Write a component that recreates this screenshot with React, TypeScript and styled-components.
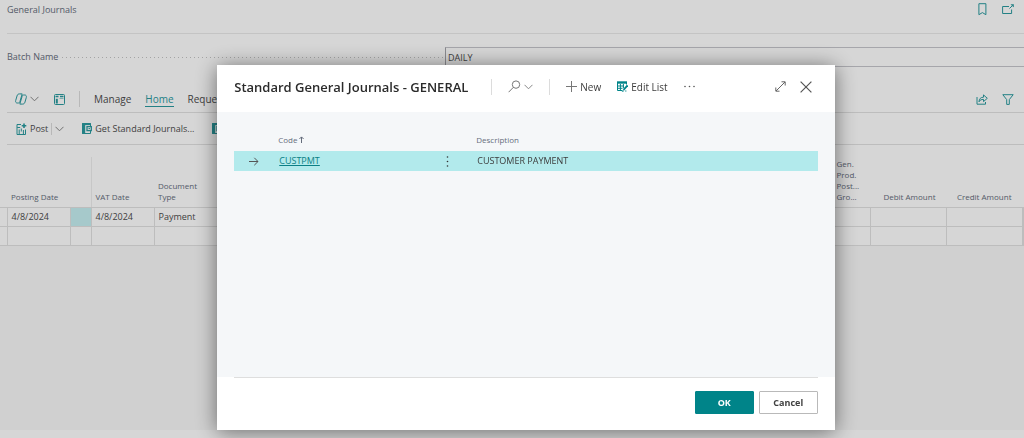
import React from "react";
import styled, { createGlobalStyle } from "styled-components";

const teal = "#2a9a9f";
const grey = "#656d7c";
const sans = `"Open Sans", "Noto Sans", sans-serif`;

const Global = createGlobalStyle`
  * { box-sizing: border-box; }
  body { margin: 0; background: #fff; color: #4c4c4c; font: 10px/14px ${sans}; overflow: hidden; }
  button { font: inherit; color: inherit; background: none; border: 0; padding: 0; margin: 0; cursor: pointer; }
  svg { display: block; flex: none; }
`;

const Page = styled.main`
  display: flex;
  flex-direction: column;
  height: 100vh;
`;
const Caption = styled.header`
  display: flex;
  justify-content: space-between;
  height: 34px;
  margin-left: 7px;
  padding: 3px 10px 0 0;
  border-bottom: 1px solid #eaeaea;
  color: ${grey};
`;
const Heading = styled.h1`
  margin: 0;
  font-size: 9px;
  line-height: 14px;
  font-weight: 400;
`;
const IconGroup = styled.div<{ $gap: number }>`
  display: flex;
  align-items: flex-start;
  gap: ${(p) => p.$gap}px;
  color: ${teal};
`;
const IconButton = styled.button`
  display: flex;
  align-items: center;
`;
const Field = styled.div`
  display: grid;
  grid-template-columns: 438px 1fr;
  align-items: center;
  height: 20px;
  margin: 13px 0 0 7px;
`;
const FieldLabel = styled.label`
  display: flex;
  align-items: center;
  gap: 4px;
  font-size: 9px;
  color: ${grey};
`;
const Leader = styled.span`
  flex: 1;
  height: 1px;
  background: repeating-linear-gradient(90deg, #c4c4c4 0 1px, transparent 1px 4px);
`;
const FieldInput = styled.input`
  height: 20px;
  min-width: 0;
  padding: 0 2px;
  border: 1px solid #c6c6cc;
  border-left-color: #a4a4aa;
  border-right: 0;
  background: #fff;
  color: #4c4c4c;
  font: 9px/18px ${sans};
`;
const Tabs = styled.nav`
  display: flex;
  align-items: center;
  justify-content: space-between;
  height: 27px;
  margin: 19px 0 0 7px;
  padding: 0 10px 0 8px;
  border-bottom: 1px solid #e2e2e2;
`;
const Row = styled.div<{ $gap: number; $center?: boolean }>`
  display: flex;
  align-items: center;
  justify-content: ${(p) => (p.$center ? "center" : "flex-start")};
  gap: ${(p) => p.$gap}px;
`;
const Tab = styled.button<{ $active?: boolean }>`
  line-height: 14px;
  border-bottom: 1px solid ${(p) => (p.$active ? teal : "transparent")};
  color: ${(p) => (p.$active ? teal : "inherit")};
`;
const Rule = styled.span<{ $h: number }>`
  width: 1px;
  height: ${(p) => p.$h}px;
  background: #dcdcdc;
`;
const Commands = styled.div`
  display: flex;
  align-items: center;
  gap: 18px;
  height: 32px;
  margin-left: 7px;
  padding-left: 9px;
  border-bottom: 1px solid #e2e2e2;
  font-size: 9px;
`;
const Command = styled.button`
  display: flex;
  align-items: center;
  gap: 3px;
  white-space: nowrap;
`;
const Lines = styled.table`
  width: 100%;
  margin-top: 12px;
  table-layout: fixed;
  border-collapse: collapse;
`;
const Th = styled.th<{ $right?: boolean; $edge?: boolean }>`
  height: 50px;
  padding: 0 ${(p) => (p.$right ? 11 : 0)}px 5px 4px;
  vertical-align: bottom;
  text-align: ${(p) => (p.$right ? "right" : "left")};
  font-size: 8px;
  line-height: 11px;
  font-weight: 400;
  white-space: nowrap;
  color: ${grey};
  border-bottom: 1px solid #e2e2e2;
  border-right: ${(p) => (p.$edge ? "1px solid #ededed" : "0")};
`;
const Td = styled.td<{ $mark?: boolean }>`
  height: 19px;
  padding: 0 4px;
  font-size: 9px;
  line-height: 14px;
  border-right: 1px solid #e2e2e2;
  border-bottom: 1px solid #e2e2e2;
  background: ${(p) => (p.$mark ? "#c6f0f2" : "transparent")};
`;
const Below = styled.div`
  flex: 1;
  margin-bottom: 8px;
  background: #f8f8f8;
`;
const Scrim = styled.div`
  position: fixed;
  inset: 0;
  display: flex;
  justify-content: center;
  align-items: flex-start;
  padding: 65px 0 8px 28px;
  background: rgba(0, 0, 0, 0.16);
`;
const Dialog = styled.section`
  display: flex;
  flex-direction: column;
  width: 62%;
  max-width: 618px;
  height: 100%;
  background: #fff;
  color: #3c3c3c;
  box-shadow: 0 2px 20px rgba(0, 0, 0, 0.5);
`;
const DialogHead = styled.header`
  display: flex;
  align-items: center;
  height: 47px;
  padding: 0 23px 4px 17px;
`;
const Title = styled.h2`
  margin: 0 23px 0 0;
  font-size: 13px;
  line-height: 18px;
  font-weight: 600;
  color: #2b2b2b;
  white-space: nowrap;
`;
const Tools = styled.div`
  display: flex;
  flex: 1;
  align-items: center;
  gap: 16px;
`;
const DialogBody = styled.div`
  flex: 1;
  padding: 20px 17px 0;
  background: #f5f7f9;
`;
const List = styled.table`
  width: 100%;
  table-layout: fixed;
  border-collapse: collapse;
`;
const ListTh = styled.th`
  height: 19px;
  padding: 0 0 4px;
  text-align: left;
  font-size: 8px;
  line-height: 12px;
  font-weight: 400;
  color: ${grey};
`;
const ListTd = styled.td<{ $lead?: boolean }>`
  height: 20px;
  padding: 0 ${(p) => (p.$lead ? 5 : 0)}px 0 1px;
  font-size: 9px;
  line-height: 14px;
  background: #b2eaec;
`;
const Link = styled.a`
  color: #0b7f86;
  text-decoration: underline;
`;
const DialogFoot = styled.footer`
  display: flex;
  justify-content: flex-end;
  gap: 5px;
  height: 53px;
  margin: 0 17px;
  padding-top: 13px;
  border-top: 1px solid #dedede;
`;
const Action = styled.button<{ $primary?: boolean }>`
  width: 59px;
  height: 23px;
  border: 1px solid ${(p) => (p.$primary ? "#008489" : "#b9b9b9")};
  border-radius: 1px;
  background: ${(p) => (p.$primary ? "#008489" : "#fff")};
  color: ${(p) => (p.$primary ? "#fff" : "#404040")};
  font-size: 9px;
  font-weight: 700;
`;

const stroke = { fill: "none", stroke: "currentColor", strokeWidth: 1 };

const Chevron = () => (
  <svg width="9" height="6" viewBox="0 0 9 6" {...stroke} stroke="#888"><path d="M.5 .8 4.5 4.8 8.5 .8" /></svg>
);
const Copilot = () => (
  <svg width="12" height="12" viewBox="0 0 12 12" {...stroke} stroke={teal}>
    <path d="M4.400 .9h2.800L5 8.300c-.4 1.300-.9 1.700-1.700 1.700H2.200C.9 10 .3 8.900.7 7.500L2 3C2.400 1.500 3.200.9 4.400.9ZM7.600 11.100H4.800L7 3.700C7.400 2.400 7.900 2 8.700 2h1.100c1.300 0 1.900 1.100 1.500 2.500L10 9c-.4 1.500-1.200 2.100-2.400 2.100Z" />
  </svg>
);
const Panel = () => (
  <svg width="11" height="11" viewBox="0 0 11 11" {...stroke} stroke={teal}>
    <rect x=".5" y=".5" width="10" height="10" rx="1" />
    <path d="M1.500 2.500h3M6 2.500h3.500" strokeWidth="1.600" />
    <path d="M2.800 4.800v4.700" strokeWidth="2" />
    <path d="M5.500 4.500h4" opacity=".5" />
  </svg>
);
const PostIcon = () => (
  <svg width="11" height="12" viewBox="0 0 11 12" {...stroke} stroke={teal}>
    <path d="M5 1.500H1v10h8.500V6.500M1.200 4.500h3M3.200 6.500v4.500M5.300 5.500v3M7.400 7v4.500" />
    <path d="M8 .5v4.600M5.700 2.800h4.600" strokeWidth="1.600" />
  </svg>
);
const JournalIcon = () => (
  <svg width="10" height="11" viewBox="0 0 10 11" {...stroke} stroke={teal}>
    <path d="M.5 .5h8v10h-8z" />
    <path d="M1.700 0v11" strokeWidth="3" />
    <path d="M3 1.200h6" strokeWidth="1.800" />
    <rect x="5" y="3.600" width="4.300" height="4" fill="#fff" strokeWidth="1.300" />
    <path d="M6.500 5.600h1.500" />
  </svg>
);
const Bookmark = () => (
  <svg width="9" height="13" viewBox="0 0 9 13" {...stroke}><path d="M.9 .7h7v11L4.400 9.600.9 11.700z" /></svg>
);
const PopOut = () => (
  <svg width="12" height="13" viewBox="0 0 12 13" {...stroke}>
    <path d="M7 3.500H.6v7h9V6.500" /><path d="m7.500 5.500 3-3" /><path d="M9 1.500h2.600v2.600z" fill="currentColor" strokeWidth=".5" />
  </svg>
);
const Share = () => (
  <svg width="12" height="11" viewBox="0 0 12 11" {...stroke}>
    <path d="M1 3v7.200h8.500V8M3 7.800c.2-3 1.600-4.600 4.500-4.600V.9l3.800 3.400-3.800 3.300V5.400C5.300 5.400 4 6 3 7.800Z" />
  </svg>
);
const Filter = () => (
  <svg width="12" height="11" viewBox="0 0 12 11" {...stroke}><path d="M.8 .7h10.400L7.300 5.600v4.800H4.700V5.600z" /></svg>
);
const Search = () => (
  <svg width="13" height="13" viewBox="0 0 13 13" {...stroke} stroke="#777"><circle cx="8" cy="4.600" r="3.700" /><path d="M5.400 7.300.6 12.200" /></svg>
);
const Plus = () => (
  <svg width="11" height="11" viewBox="0 0 11 11" {...stroke} stroke="#777"><path d="M5.500 0v11M0 5.500h11" /></svg>
);
const EditList = () => (
  <svg width="11" height="11" viewBox="0 0 11 11" {...stroke} stroke="#008489">
    <path d="M.5 1v8.500H5M.5 5h6.500M.5 7.300h5M3.400 3v6.500M6.400 3v4M9.500 1v2.500" />
    <path d="M0 1.500h10" strokeWidth="2.400" />
    <path d="m10.500 4.400-4 4.400" strokeWidth="1.800" />
    <path d="m6 9-.7 1.500L7 9.800M8 10h1.500" strokeWidth=".8" />
  </svg>
);
const Dots = () => (
  <svg width="11" height="3" viewBox="0 0 11 3" fill="#555"><circle cx="1" cy="1.500" r=".8" /><circle cx="5.500" cy="1.500" r=".8" /><circle cx="10" cy="1.500" r=".8" /></svg>
);
const VDots = () => (
  <svg width="3" height="11" viewBox="0 0 3 11" fill="#333"><circle cx="1.500" cy="1" r=".8" /><circle cx="1.500" cy="5.500" r=".8" /><circle cx="1.500" cy="10" r=".8" /></svg>
);
const Expand = () => (
  <svg width="11" height="11" viewBox="0 0 11 11" {...stroke} stroke="#666"><path d="M1 10 10 1M6.500 .8h3.700v3.700M.8 6.500v3.700h3.700" /></svg>
);
const Close = () => (
  <svg width="12" height="12" viewBox="0 0 12 12" {...stroke} stroke="#555" strokeWidth={1.2}><path d="m.6 .6 10.800 10.800M11.400 .6.6 11.400" /></svg>
);
const Arrow = () => (
  <svg width="10" height="9" viewBox="0 0 10 9" {...stroke} stroke="#555"><path d="M0 4.500h9M5.300 .8 9 4.500 5.300 8.200" /></svg>
);
const SortUp = () => (
  <svg width="5" height="8" viewBox="0 0 5 8" {...stroke} stroke={grey}><path d="M2.500 7V1M.4 3 2.500 .9 4.600 3" /></svg>
);

export default function App() {
  return (
    <>
      <Global />
      <Page>
        <Caption>
          <Heading>General Journals</Heading>
          <IconGroup $gap={15}>
            <IconButton aria-label="Bookmark"><Bookmark /></IconButton>
            <IconButton aria-label="Open in new window"><PopOut /></IconButton>
          </IconGroup>
        </Caption>
        <Field>
          <FieldLabel htmlFor="batch">Batch Name<Leader /></FieldLabel>
          <FieldInput id="batch" defaultValue="DAILY" />
        </Field>
        <Tabs>
          <Row $gap={14}>
            <Row $gap={15}>
              <Command aria-label="Copilot"><Copilot /><Chevron /></Command>
              <IconButton aria-label="Analyze"><Panel /></IconButton>
            </Row>
            <Rule $h={16} />
            <Tab>Manage</Tab>
            <Tab $active>Home</Tab>
            <Tab>Request</Tab>
          </Row>
          <IconGroup $gap={14}>
            <IconButton aria-label="Share"><Share /></IconButton>
            <IconButton aria-label="Filter"><Filter /></IconButton>
          </IconGroup>
        </Tabs>
        <Commands>
          <Row $gap={3}>
            <Command><PostIcon />Post</Command>
            <Rule $h={12} />
            <IconButton aria-label="More posting options"><Chevron /></IconButton>
          </Row>
          <Command><JournalIcon />Get Standard Journals...</Command>
          <IconButton aria-label="Journal"><JournalIcon /></IconButton>
        </Commands>
        <Lines>
          <colgroup>
            <col style={{ width: 7 }} /><col style={{ width: 63 }} /><col style={{ width: 21 }} />
            <col style={{ width: 63 }} /><col /><col style={{ width: 38 }} />
            <col style={{ width: 76 }} /><col style={{ width: 76 }} /><col style={{ width: 1 }} />
          </colgroup>
          <thead>
            <tr>
              <Th /><Th>Posting Date</Th><Th $edge /><Th>VAT Date</Th><Th>Document<br />Type</Th>
              <Th>Gen.<br />Prod.<br />Post...<br />Gro...</Th>
              <Th $right>Debit Amount</Th><Th $right>Credit Amount</Th><Th />
            </tr>
          </thead>
          <tbody>
            <tr><Td /><Td>4/8/2024</Td><Td $mark /><Td>4/8/2024</Td><Td>Payment</Td><Td /><Td /><Td /><Td /></tr>
            <tr><Td /><Td /><Td /><Td /><Td /><Td /><Td /><Td /><Td /></tr>
          </tbody>
        </Lines>
        <Below />
      </Page>
      <Scrim>
        <Dialog role="dialog" aria-labelledby="dialog-title">
          <DialogHead>
            <Title id="dialog-title">Standard General Journals - GENERAL</Title>
            <Tools>
              <Rule $h={16} />
              <Command aria-label="Search"><Search /><Chevron /></Command>
              <Rule $h={16} />
              <Command><Plus />New</Command>
              <Command><EditList />Edit List</Command>
              <IconButton aria-label="More options"><Dots /></IconButton>
            </Tools>
            <Row $gap={14}>
              <IconButton aria-label="Expand"><Expand /></IconButton>
              <IconButton aria-label="Close"><Close /></IconButton>
            </Row>
          </DialogHead>
          <DialogBody>
            <List>
              <colgroup>
                <col style={{ width: 44 }} /><col style={{ width: 167 }} /><col style={{ width: 31 }} /><col />
              </colgroup>
              <thead>
                <tr>
                  <ListTh /><ListTh><Row $gap={2}>Code<SortUp /></Row></ListTh><ListTh /><ListTh>Description</ListTh>
                </tr>
              </thead>
              <tbody>
                <tr>
                  <ListTd $lead><Row $gap={0} $center><Arrow /></Row></ListTd>
                  <ListTd><Link href="#custpmt">CUSTPMT</Link></ListTd>
                  <ListTd><IconButton aria-label="Row options"><VDots /></IconButton></ListTd>
                  <ListTd>CUSTOMER PAYMENT</ListTd>
                </tr>
              </tbody>
            </List>
          </DialogBody>
          <DialogFoot>
            <Action $primary>OK</Action>
            <Action>Cancel</Action>
          </DialogFoot>
        </Dialog>
      </Scrim>
    </>
  );
}
